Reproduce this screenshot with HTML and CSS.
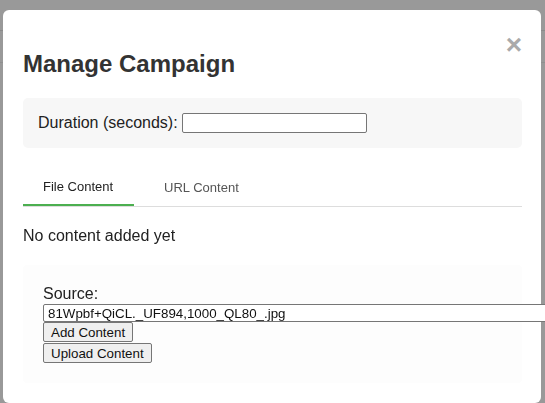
FILE: index.html
```html
<!DOCTYPE html>
<html>
<head>
<meta charset="utf-8">
<link rel="stylesheet" href="styles.css">
</head>
<body>
<div class="page">
  <div class="page-bar"></div>
  <div class="page-bar2"></div>
</div>
<div class="overlay">
  <div class="modal">
    <div class="modal-header">
      <h2 class="title">Manage Campaign</h2>
      <span class="close">&times;</span>
    </div>
    <div class="duration-box">
      <label class="duration-label">Duration (seconds): <input type="text" class="duration-input"></label>
    </div>
    <div class="tabs">
      <div class="tab active">File Content</div>
      <div class="tab">URL Content</div>
    </div>
    <p class="empty">No content added yet</p>
    <div class="source-box">
      <label class="source-label">Source:</label>
      <input type="text" class="source-input" value="81Wpbf+QiCL._UF894,1000_QL80_.jpg" readonly>
      <button class="btn">Add Content</button>
      <button class="btn btn-upload">Upload Content</button>
    </div>
  </div>
</div>
</body>
</html>
```
FILE: styles.css
```css
html, body {
  margin: 0;
  padding: 0;
}
body {
  width: 545px;
  height: 403px;
  overflow: hidden;
  background: #999999;
  font-family: "Liberation Sans", Arial, sans-serif;
  color: #222;
}
.page {
  height: 403px;
}
.page-bar {
  height: 30px;
  border-bottom: 1px solid #8a8a8a;
}
.page-bar2 {
  height: 31px;
  border-bottom: 1px solid #8f8f8f;
}
.overlay {
  position: fixed;
  left: 0;
  top: 0;
  right: 0;
  bottom: 0;
}
.modal {
  position: absolute;
  left: 3px;
  top: 10px;
  width: 538px;
  box-sizing: border-box;
  padding: 0 19px 20px 20px;
  background: #fff;
  border-radius: 6px;
}
.modal-header {
  display: flex;
  justify-content: space-between;
  align-items: flex-start;
}
.title {
  margin: 40px 0 20px;
  font-size: 24px;
  font-weight: bold;
  color: #333;
  line-height: 28px;
}
.close {
  margin-top: 19px;
  font-size: 28px;
  font-weight: bold;
  line-height: 32px;
  color: #aaa;
}
.duration-box {
  background: #f7f7f7;
  border-radius: 5px;
  padding: 15px;
  height: 20px;
  display: flex;
  align-items: center;
}
.duration-label {
  font-size: 16px;
  display: flex;
  align-items: center;
  white-space: pre;
}
.duration-input {
  width: 185px;
  height: 20px;
  box-sizing: border-box;
  border: 1px solid #767676;
  border-radius: 2px;
  padding: 0 3px;
  margin: 0;
  font-family: "Liberation Sans", Arial, sans-serif;
  font-size: 13.33px;
}
.tabs {
  display: flex;
  gap: 10px;
  margin-top: 20px;
  border-bottom: 1px solid #ddd;
}
.tab {
  font-size: 13px;
  line-height: 15px;
  padding: 11px 21px 12px 20px;
  color: #555;
}
.tab + .tab {
  padding-top: 12px;
  padding-bottom: 11px;
}
.tab.active {
  color: #222;
  padding-bottom: 10px;
  border-bottom: 2px solid #4caf50;
}
.empty {
  margin: 20px 0;
  font-size: 16px;
  line-height: 18px;
  color: #222;
}
.source-box {
  background: #fdfdfd;
  border-radius: 4px;
  padding: 20px;
  display: flex;
  flex-direction: column;
  align-items: flex-start;
}
.source-label {
  font-size: 16px;
  line-height: 18px;
}
.source-input {
  width: 520px;
  height: 18px;
  box-sizing: border-box;
  border: 1px solid #767676;
  border-radius: 2px;
  padding: 0 4px;
  margin: 1px 0 0;
  font-family: "Liberation Sans", Arial, sans-serif;
  font-size: 13.33px;
  color: #111;
  background: #fff;
  outline: none;
}
.btn {
  height: 20px;
  box-sizing: border-box;
  margin: 0;
  padding: 0 7px;
  background: #efefef;
  border: 1px solid #767676;
  border-radius: 2px;
  font-family: "Liberation Sans", Arial, sans-serif;
  font-size: 13.33px;
  color: #111;
}
.btn-upload {
  margin-top: 1px;
}
```
